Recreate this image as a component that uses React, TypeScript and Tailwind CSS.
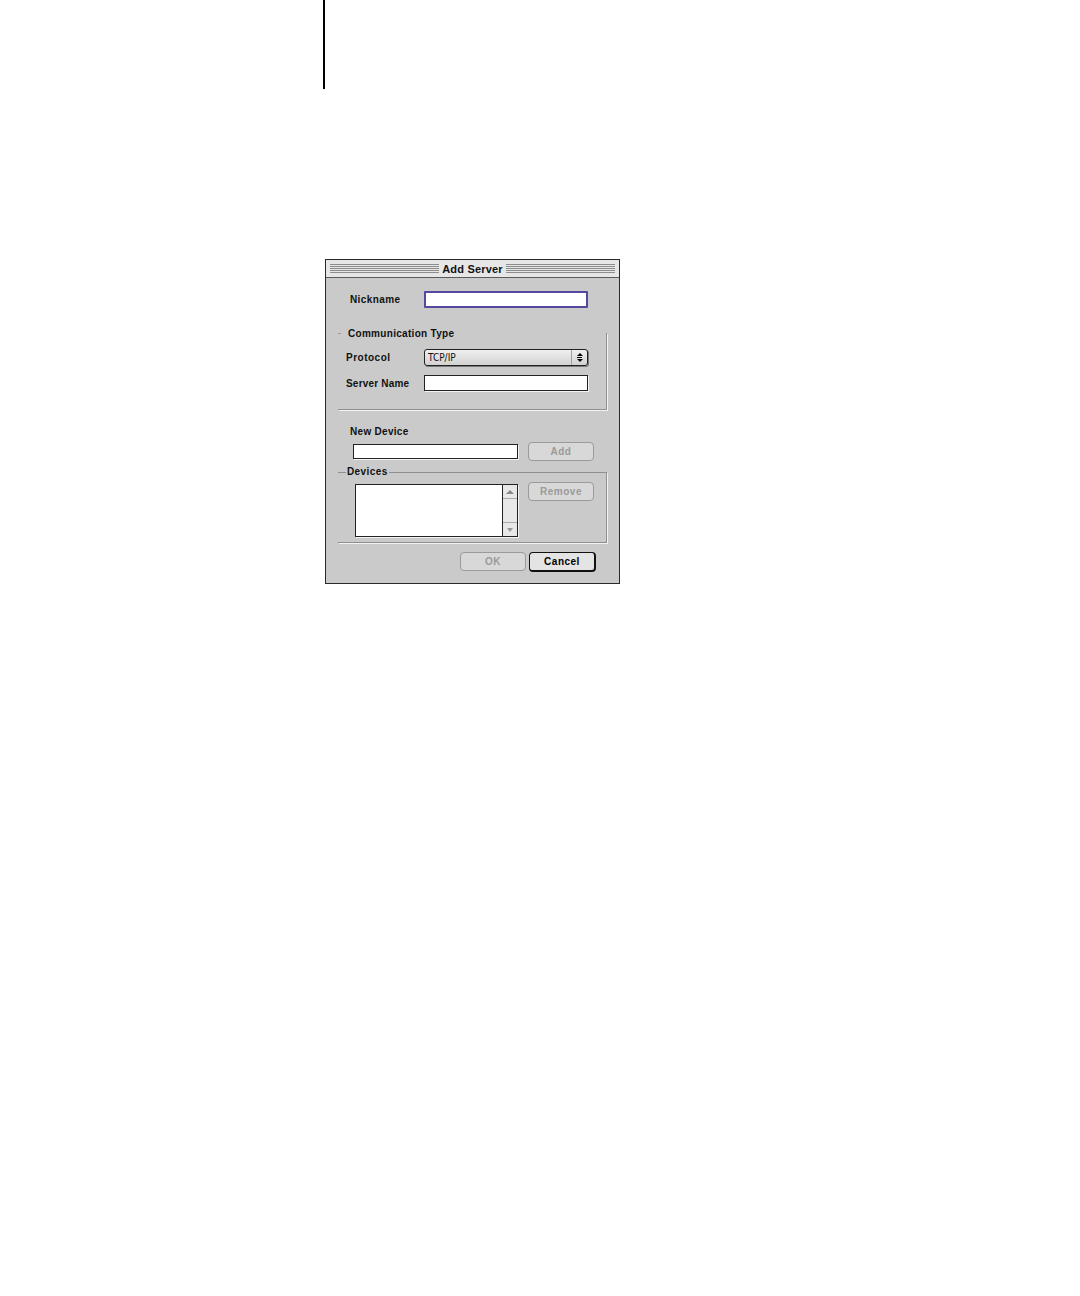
const font = "font-['Liberation_Sans',Arial,sans-serif] font-bold text-[10px] leading-[12px]";
const ui = `${font} text-[#111]`;

function Stripes() {
  return (
    <div className="flex-1 flex flex-col gap-px">
      <div className="h-px bg-[#8c8c8c]" />
      <div className="h-px bg-[#8c8c8c]" />
      <div className="h-px bg-[#8c8c8c]" />
      <div className="h-px bg-[#8c8c8c]" />
      <div className="h-px bg-[#8c8c8c]" />
    </div>
  );
}

function Button({ label, disabled, isDefault, w }: { label: string; disabled?: boolean; isDefault?: boolean; w: string }) {
  if (isDefault) {
    return (
      <div className={`${w} h-[20px] rounded-[4px] border border-[#111] border-r-2 border-b-2 bg-[#e4e4e4] flex items-center justify-center ${font} text-black tracking-[0.5px]`}>
        {label}
      </div>
    );
  }
  return (
    <div
      className={`${w} h-[19px] rounded-[4px] border border-[#9a9a9a] bg-[#d8d8d8] flex items-center justify-center ${font} tracking-[0.5px] ${disabled ? "text-[#9a9a9a]" : "text-black"}`}
    >
      {label}
    </div>
  );
}

export default function App() {
  return (
    <div className="w-[1080px] h-[1296px] bg-white flex flex-col">
      <div className="ml-[323px] w-[2px] h-[89px] bg-black" />

      <div className="ml-[325px] mt-[170px] w-[295px] h-[325px] border border-[#2a2a2a] bg-[#cacaca] flex flex-col">
        {/* title bar */}
        <div className="h-[18px] bg-[#e6e6e6] border-b border-[#5a5a5a] flex items-center px-[4px]">
          <Stripes />
          <div className={`${ui} text-[11px] px-[3px] tracking-[0.2px]`}>Add Server</div>
          <Stripes />
        </div>

        {/* nickname */}
        <div className="mt-[13px] flex items-center">
          <div className={`${ui} ml-[24px] w-[74px] tracking-[0.4px]`}>Nickname</div>
          <div className="w-[164px] h-[17px] border-2 border-[#55499f] bg-white rounded-[1px]" />
        </div>

        {/* communication type group */}
        <div className="relative mt-[25px] ml-[12px] w-[269px] border-r border-b border-[#8f8f8f] shadow-[1px_1px_0_#f2f2f2] pb-[18px]">
          <div className="absolute left-0 top-0 w-[3px] h-px bg-[#9a9a9a]" />
          <div className={`${ui} absolute left-[10px] -top-[5px] tracking-[0.3px]`}>Communication Type</div>

          <div className="mt-[16px] flex items-center">
            <div className={`${ui} ml-[8px] w-[78px] tracking-[0.5px]`}>Protocol</div>
            <div className="w-[164px] h-[17px] rounded-[3px] border border-[#222] shadow-[1px_1px_0_#7a7a7a] bg-gradient-to-b from-[#f0f0f0] to-[#d2d2d2] flex items-center">
              <div className="flex-1 pl-[3px] font-['DejaVu_Sans_Condensed','DejaVu_Sans',sans-serif] text-[10px] leading-[12px] text-[#111]">TCP/IP</div>
              <div className="w-[16px] h-full border-l border-[#a0a0a0] flex flex-col items-center justify-center gap-[1px]">
                <div className="w-0 h-0 border-l-[3px] border-r-[3px] border-b-[3px] border-l-transparent border-r-transparent border-b-black" />
                <div className="w-[5px] h-px bg-black" />
                <div className="w-0 h-0 border-l-[3px] border-r-[3px] border-t-[3px] border-l-transparent border-r-transparent border-t-black" />
              </div>
            </div>
          </div>

          <div className="mt-[9px] flex items-center">
            <div className={`${ui} ml-[8px] w-[78px] tracking-[0.2px] translate-y-[1px]`}>Server Name</div>
            <div className="w-[164px] h-[16px] border border-[#222] bg-white shadow-[1px_1px_0_#f4f4f4]" />
          </div>
        </div>

        {/* new device */}
        <div className={`${ui} mt-[16px] ml-[24px] tracking-[0.3px]`}>New Device</div>
        <div className="mt-[4px] flex items-center">
          <div className="ml-[27px] w-[165px] h-[15px] border border-[#222] bg-white shadow-[1px_1px_0_#f4f4f4]" />
          <div className="ml-[10px]">
            <Button label="Add" disabled w="w-[66px]" />
          </div>
        </div>

        {/* devices group */}
        <div className="relative mt-[11px] ml-[12px] w-[269px] h-[71px] border-t border-r border-b border-[#8f8f8f] shadow-[1px_1px_0_#f2f2f2] flex items-start">
          <div className={`${ui} absolute left-[8px] -top-[7px] bg-[#cacaca] px-[1px] tracking-[0.4px]`}>Devices</div>
          <div className="ml-[17px] mt-[11px] w-[163px] h-[53px] border border-[#222] bg-white shadow-[1px_1px_0_#f4f4f4] flex justify-end">
            <div className="w-[15px] h-full border-l border-[#222] bg-[#e8e8e8] flex flex-col justify-between">
              <div className="h-[14px] border-b border-[#aaa] flex items-center justify-center">
                <div className="w-0 h-0 border-l-[4px] border-r-[4px] border-b-[4px] border-l-transparent border-r-transparent border-b-[#888]" />
              </div>
              <div className="h-[14px] border-t border-[#aaa] flex items-center justify-center">
                <div className="w-0 h-0 border-l-[3px] border-r-[3px] border-t-[4px] border-l-transparent border-r-transparent border-t-[#999]" />
              </div>
            </div>
          </div>
          <div className="ml-[10px] mt-[9px]">
            <Button label="Remove" disabled w="w-[66px]" />
          </div>
        </div>

        {/* bottom buttons */}
        <div className="mt-[9px] flex justify-end gap-[3px] pr-[23px]">
          <Button label="OK" disabled w="w-[66px]" />
          <Button label="Cancel" isDefault w="w-[67px]" />
        </div>
      </div>
    </div>
  );
}
